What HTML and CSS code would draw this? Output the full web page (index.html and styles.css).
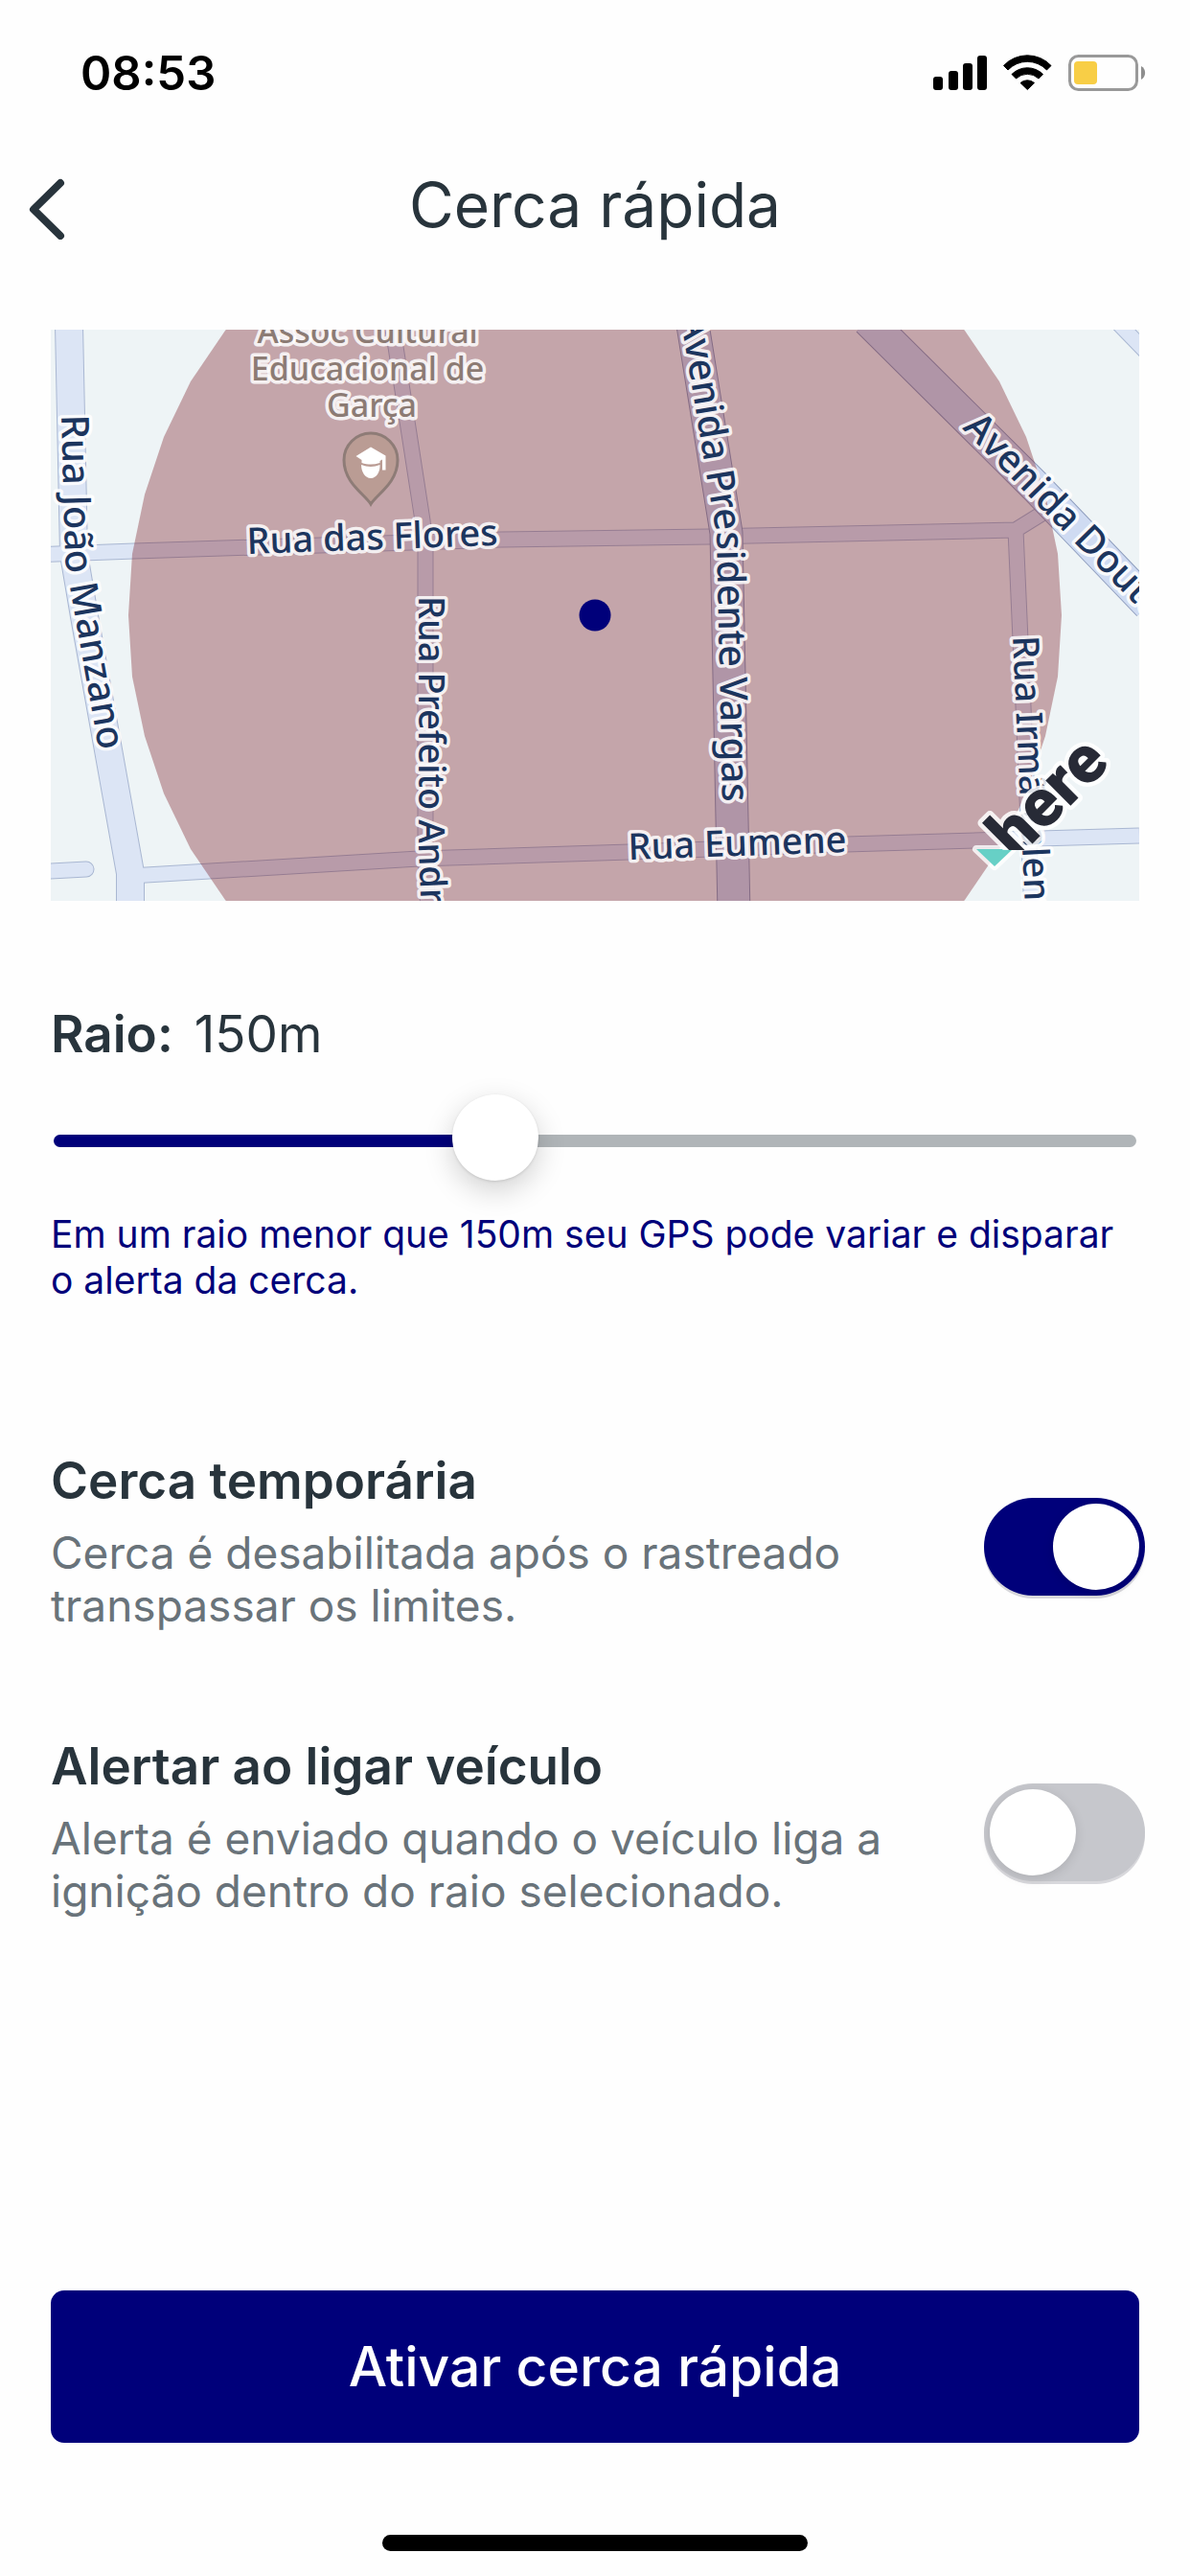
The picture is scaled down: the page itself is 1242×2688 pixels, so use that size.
FILE: index.html
```html
<!DOCTYPE html>
<html lang="pt-BR">
<head>
<meta charset="utf-8">
<meta name="viewport" content="width=device-width, initial-scale=1">
<title>Cerca rápida</title>
<link rel="stylesheet" href="styles.css">
</head>
<body>
<div class="screen">
  <div class="status">
    <time class="status-time">08:53</time>
    <svg class="status-icons" width="222" height="40" viewBox="0 0 222 40" aria-hidden="true">
      <rect x="0" y="24" width="10" height="14" rx="3"/>
      <rect x="16" y="18" width="10" height="20" rx="3"/>
      <rect x="31" y="10" width="10" height="28" rx="3"/>
      <rect x="46" y="2" width="10" height="36" rx="3"/>
      <path d="M73.500 12.500A34 34 0 0 1 123 12.500L118.500 17A28 28 0 0 0 78 17Z" stroke="#000" stroke-width="1" stroke-linejoin="round"/>
      <path d="M82 21.500A23 23 0 0 1 114.500 21.500L110 26A17 17 0 0 0 86.500 26Z" stroke="#000" stroke-width="1" stroke-linejoin="round"/>
      <path d="M91 30.500A11 11 0 0 1 105.500 30.500L98.300 37.500Z" stroke="#000" stroke-width="1" stroke-linejoin="round"/>
      <rect x="142.500" y="2.500" width="70" height="35" rx="9" fill="none" stroke="#999" stroke-width="3"/>
      <rect x="147" y="8" width="24" height="24" rx="4" fill="#f8ce46"/>
      <path d="M217 13a8 8 0 0 1 0 14Z" fill="#8e8e8e"/>
    </svg>
  </div>

  <header class="header">
    <button class="back" type="button" aria-label="Voltar">
      <svg width="40" height="72" viewBox="0 0 40 72" aria-hidden="true"><path d="M33 13 5 40.500 33 68" fill="none" stroke="#28343c" stroke-width="8" stroke-linecap="round" stroke-linejoin="round"/></svg>
    </button>
    <h1 class="title">Cerca rápida</h1>
  </header>

  <main class="content">
    <svg class="map" viewBox="0 0 1136 596" role="img" aria-label="Mapa da cerca">
      <defs>
        <path id="joao" d="M11 89L15 240L56 472"/>
        <path id="prefeito" d="M384 278L384 540L388 640"/>
        <path id="presidente" d="M646 -80L695 216L701 493"/>
        <path id="doutor" d="M951 103L1190 346"/>
        <path id="irma" d="M1004 320L1024 760"/>
        <clipPath id="logo-clip"><rect x="960" y="390" width="176" height="153"/></clipPath>
      </defs>
      <rect width="1136" height="596" fill="#eef4f6"/>
      <g class="casing">
        <path class="street" d="M-20 235L87 231L470 219L688 216L1007 209L1036 191M1007 209L1015 393L1024 610M357 0L360 18L388 199L391 226L391 543L394 610M83 570L384 552L604 545L830 537L1136 528"/>
        <path class="street round" d="M-20 566L37 563"/>
        <path class="street" d="M1111 -10L1146 26"/>
        <path class="wide" d="M19 -5L24 234L35 299L83 567L83 610"/>
      </g>
      <g class="fill">
        <path class="street" d="M-20 235L87 231L470 219L688 216L1007 209L1036 191M1007 209L1015 393L1024 610M357 0L360 18L388 199L391 226L391 543L394 610M83 570L384 552L604 545L830 537L1136 528"/>
        <path class="street round" d="M-20 566L37 563"/>
        <path class="street" d="M1111 -10L1146 26"/>
        <path class="wide" d="M19 -5L24 234L35 299L83 567L83 610"/>
      </g>
      <path class="avenue-casing" d="M670 -5L705 212L713 610M853 -10L1027 163L1146 287"/>
      <path class="avenue" d="M670 -5L705 212L713 610M853 -10L1027 163L1146 287"/>
      <polygon fill="#6f0510" fill-opacity=".33" points="81,298 85,234 98,172 118,112 146,54 182,1 224,-46 912,-46 954,1 990,54 1018,112 1038,172 1051,234 1055,298 1051,362 1038,424 1018,484 990,542 954,595 912,642 224,642 182,595 146,542 118,484 98,424 85,362"/>

      <text class="poi" text-anchor="middle"><tspan x="335" y="14">Assoc Cultural</tspan> <tspan x="335" y="53">Educacional de</tspan> <tspan x="335" y="91">Garça</tspan></text>
      <path d="M334 182C328 172 306 160 306 136A28 28 0 0 1 362 136C362 160 340 172 334 182Z" fill="#ba9c94" stroke="#8e7c77" stroke-width="3"/>
      <path d="M318.500 132 334 122.500 349.500 131.500V146.500H346V135.500L343.500 137V139C337 141 331 141 324.500 139V136ZM324 141C331 143.500 337 143.500 343.500 141C344 148 340 155 334 155S324 148 324 141Z" fill="#fff"/>

      <g class="label">
        <text transform="translate(205 234) rotate(-2)">Rua das Flores</text>
        <text transform="translate(603 553) rotate(-2)">Rua Eumene</text>
        <text><textPath href="#prefeito">Rua Prefeito André</textPath></text>
        <text><textPath href="#irma">Rua Irmã Valentina</textPath></text>
      </g>
      <g class="label label-large">
        <text><textPath href="#joao">Rua João Manzano</textPath></text>
        <text text-anchor="end"><textPath href="#presidente" startOffset="100%">Avenida Presidente Vargas</textPath></text>
        <text><textPath href="#doutor">Avenida Doutor</textPath></text>
      </g>

      <path d="M966 542H1004L985 560Z" fill="#67d0c6" stroke="#fff" stroke-opacity=".8" stroke-width="8" stroke-linejoin="round" paint-order="stroke"/>
      <g clip-path="url(#logo-clip)"><text class="logo" transform="translate(1007 554) rotate(-45)">here</text></g>
      <circle cx="568" cy="298" r="16.500" fill="#00007a"/>
    </svg>

    <div class="radius">
      <label class="radius-label" for="raio">Raio:</label>
      <output class="radius-value" for="raio">150m</output>
    </div>
    <input class="slider" id="raio" type="range" min="50" max="300" value="150">
    <p class="hint">Em um raio menor que 150m seu GPS pode variar e disparar o alerta da cerca.</p>

    <section class="settings">
      <div class="setting">
        <div class="setting-text">
          <label class="setting-title" for="temporaria">Cerca temporária</label>
          <p class="setting-desc">Cerca é desabilitada após o rastreado transpassar os limites.</p>
        </div>
        <input class="switch" id="temporaria" type="checkbox" role="switch" checked>
      </div>
      <div class="setting">
        <div class="setting-text">
          <label class="setting-title" for="ligar">Alertar ao ligar veículo</label>
          <p class="setting-desc">Alerta é enviado quando o veículo liga a ignição dentro do raio selecionado.</p>
        </div>
        <input class="switch" id="ligar" type="checkbox" role="switch">
      </div>
    </section>

    <button class="activate" type="button">Ativar cerca rápida</button>
  </main>
  <div class="home"></div>
</div>
</body>
</html>
```
FILE: styles.css
```css
* { box-sizing: border-box; }

body {
  margin: 0;
  background: #fefefe;
  color: #28343c;
  font-family: Inter, "Liberation Sans", sans-serif;
}

.screen {
  display: flex;
  flex-direction: column;
  min-height: 100vh;
}

.status {
  display: flex;
  align-items: center;
  justify-content: space-between;
  height: 152px;
  padding: 0 46px 0 84px;
  color: #000;
}

.status-time {
  font-size: 49px;
  font-weight: 600;
}

.header {
  display: grid;
  grid-template-columns: 90px 1fr 90px;
  align-items: center;
  height: 124px;
}

.back {
  display: flex;
  justify-self: start;
  margin-left: 30px;
  padding: 0;
  border: 0;
  background: none;
}

.title {
  margin: 0;
  font-size: 64px;
  font-weight: 400;
  line-height: 80px;
  text-align: center;
}

.content {
  display: flex;
  flex: 1;
  flex-direction: column;
  padding: 68px 53px 96px;
}

.map {
  display: block;
  width: 100%;
  overflow: hidden;
}

.casing, .fill, .avenue, .avenue-casing {
  fill: none;
  stroke-linejoin: round;
}

.casing { stroke: #a9b7d2; }
.fill { stroke: #dce5f5; }
.casing .street { stroke-width: 17px; }
.fill .street { stroke-width: 15px; }
.casing .wide { stroke-width: 30px; }
.fill .wide { stroke-width: 28px; }
.round { stroke-linecap: round; }
.avenue-casing { stroke: #8e9dbd; stroke-width: 35px; }
.avenue { stroke: #cfdbf2; stroke-width: 33px; }

.label, .poi {
  font-family: "Noto Sans", "Open Sans", sans-serif;
  font-weight: 500;
  paint-order: stroke;
  stroke: rgba(255, 255, 255, .85);
  stroke-linejoin: round;
  stroke-width: 7px;
}

.label {
  fill: #1c355e;
  font-size: 38px;
}

.label-large { font-size: 40px; }

.poi {
  fill: #8c7b74;
  font-size: 34px;
}

.logo {
  fill: #272a36;
  font-family: Roboto, sans-serif;
  font-size: 70px;
  font-weight: 900;
  paint-order: stroke;
  stroke: rgba(255, 255, 255, .85);
  stroke-linejoin: round;
  stroke-width: 9px;
}

.radius {
  display: flex;
  gap: 22px;
  margin-top: 107px;
  font-size: 53px;
  line-height: 64px;
}

.radius-label { font-weight: 600; }

.slider {
  height: 90px;
  margin: 34px 3px 0;
  appearance: none;
  background: none;
}

.slider::-webkit-slider-runnable-track {
  height: 13px;
  border-radius: 7px;
  background: linear-gradient(to right, #00007a 40%, #b0b5b8 40%);
}

.slider::-webkit-slider-thumb {
  width: 90px;
  height: 90px;
  margin-top: -42px;
  border-radius: 50%;
  appearance: none;
  background: #fff;
  box-shadow: 0 10px 30px rgba(0, 0, 0, .18), 0 1px 3px rgba(0, 0, 0, .12);
}

.hint {
  margin: 29px 0 0;
  color: #00007a;
  font-size: 39px;
  line-height: 48px;
}

.settings {
  display: grid;
  gap: 108px;
  margin: 153px -6px 96px 0;
}

.setting {
  display: flex;
  align-items: center;
  justify-content: space-between;
}

.setting-text { max-width: 900px; }

.setting-title {
  display: block;
  font-size: 53px;
  font-weight: 600;
  line-height: 64px;
}

.setting-desc {
  margin: 16px 0 0;
  color: #69737a;
  font-size: 46px;
  line-height: 55px;
}

.switch {
  flex: none;
  width: 168px;
  height: 102px;
  margin: 12px 0 0;
  padding: 6px;
  border-radius: 51px;
  appearance: none;
  background: #c6c7cc;
  box-shadow: 0 3px 0 #d8d8dc;
}

.switch::before {
  display: block;
  width: 90px;
  height: 90px;
  border-radius: 50%;
  background: #fff;
  box-shadow: 0 3px 12px rgba(0, 0, 0, .12);
  content: "";
}

.switch:checked { background: #00007a; }
.switch:checked::before { margin-left: auto; }

.activate {
  height: 159px;
  margin-top: auto;
  border: 0;
  border-radius: 14px;
  background: #00007a;
  color: #fff;
  font: 500 57px/72px Inter, "Liberation Sans", sans-serif;
}

.home {
  align-self: center;
  width: 444px;
  height: 17px;
  margin-bottom: 26px;
  border-radius: 9px;
  background: #000;
}
```
